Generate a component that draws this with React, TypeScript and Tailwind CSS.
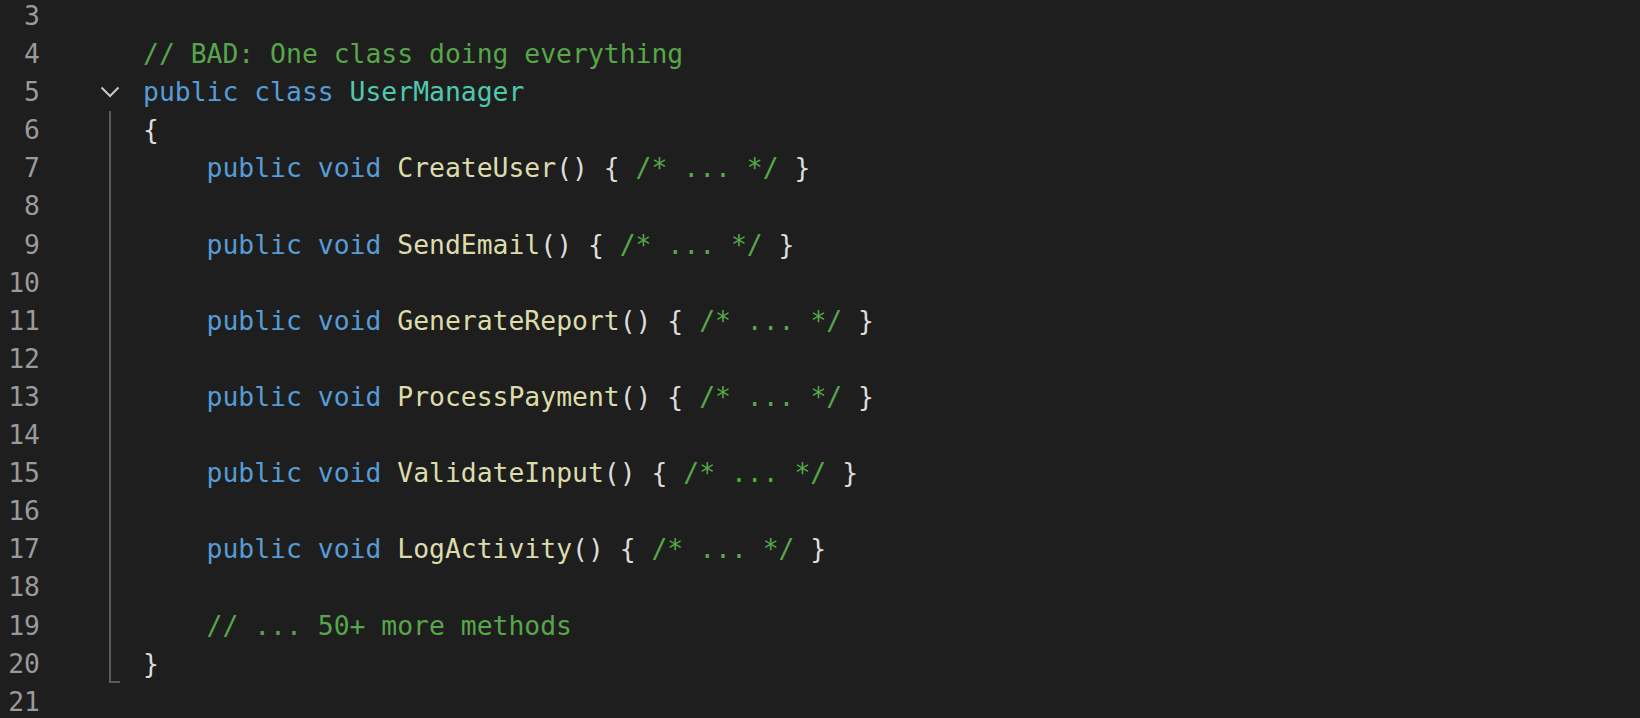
type Tok = [string, string];

const KW = 'text-[#569cd6]';
const CLS = 'text-[#4ec9b0]';
const FN = 'text-[#dcdcaa]';
const CM = 'text-[#57a64a]';
const PN = 'text-[#dcdcdc]';

const method = (name: string): Tok[] => [
  ['    ', PN],
  ['public ', KW],
  ['void ', KW],
  [name, FN],
  ['() { ', PN],
  ['/* ... */', CM],
  [' }', PN],
];

const lines: { n: number; toks: Tok[] }[] = [
  { n: 3, toks: [] },
  { n: 4, toks: [['// BAD: One class doing everything', CM]] },
  { n: 5, toks: [['public ', KW], ['class ', KW], ['UserManager', CLS]] },
  { n: 6, toks: [['{', PN]] },
  { n: 7, toks: method('CreateUser') },
  { n: 8, toks: [] },
  { n: 9, toks: method('SendEmail') },
  { n: 10, toks: [] },
  { n: 11, toks: method('GenerateReport') },
  { n: 12, toks: [] },
  { n: 13, toks: method('ProcessPayment') },
  { n: 14, toks: [] },
  { n: 15, toks: method('ValidateInput') },
  { n: 16, toks: [] },
  { n: 17, toks: method('LogActivity') },
  { n: 18, toks: [] },
  { n: 19, toks: [['    ', PN], ['// ... 50+ more methods', CM]] },
  { n: 20, toks: [['}', PN]] },
  { n: 21, toks: [] },
];

function Chevron() {
  return (
    <svg width="20" height="12" viewBox="0 0 20 12" fill="none">
      <path d="M1.5 1.5 L10 10 L18.5 1.5" stroke="#c8c8c8" strokeWidth="2" />
    </svg>
  );
}

export default function App() {
  return (
    <div className="h-[718px] w-full overflow-hidden bg-[#1e1e1e]">
      <div
        className="-mt-[3px] flex text-[26.4px] leading-[38.1px] whitespace-pre"
        style={{ fontFamily: '"DejaVu Sans Mono", "Liberation Mono", monospace' }}
      >
        {/* line numbers */}
        <div className="flex w-[40px] flex-col items-end text-[#9a9a9a]">
          {lines.map((l) => (
            <div key={l.n} className="h-[38.1px]">
              {l.n}
            </div>
          ))}
        </div>

        {/* gutter: fold + indent guide */}
        <div className="flex w-[103px] flex-col">
          <div className="h-[76.2px]" />
          <div className="flex h-[38.1px] items-center pl-[60px]">
            <Chevron />
          </div>
          <div className="ml-[69px] h-[571.5px] w-[11px] border-b-2 border-l-2 border-[#5a5a5a]" />
        </div>

        {/* code */}
        <div className="flex flex-col">
          {lines.map((l) => (
            <div key={l.n} className="h-[38.1px]">
              {l.toks.map(([t, c], i) => (
                <span key={i} className={c}>
                  {t}
                </span>
              ))}
            </div>
          ))}
        </div>
      </div>
    </div>
  );
}
